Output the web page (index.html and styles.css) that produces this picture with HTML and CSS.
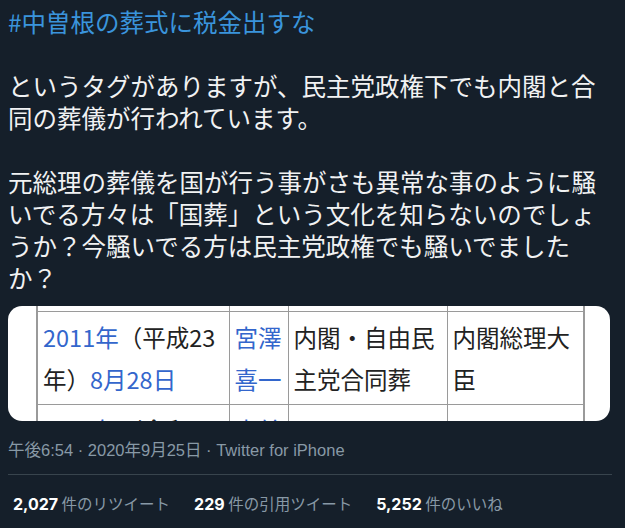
FILE: index.html
```html
<!DOCTYPE html>
<html lang="ja">
<head>
<meta charset="utf-8">
<title>Tweet</title>
<link rel="stylesheet" href="styles.css">
</head>
<body>
<article class="tweet">
  <div class="text">
    <p><a class="tag" href="#">#中曽根の葬式に税金出すな</a></p>
    <p>というタグがありますが、民主党政権下でも内閣と合同の葬儀が行われています。</p>
    <p>元総理の葬儀を国が行う事がさも異常な事のように騒いでる方々は「国葬」という文化を知らないのでしょうか？今騒いでる方は民主党政権でも騒いでましたか？</p>
  </div>
  <div class="media">
    <table class="wiki">
      <colgroup>
        <col class="c1"><col class="c2"><col class="c3"><col class="c4">
      </colgroup>
      <tr class="cut"><td></td><td></td><td></td><td></td></tr>
      <tr>
        <td><span class="link">2011年</span>（平成23<br>年）<span class="link">8月28日</span></td>
        <td><span class="link">宮澤<br>喜一</span></td>
        <td>内閣・自由民<br>主党合同葬</td>
        <td>内閣総理大<br>臣</td>
      </tr>
      <tr class="next">
        <td><div class="clip"><span class="link">2020年</span>（令和2</div></td>
        <td><div class="clip"><span class="link">中曽</span></div></td>
        <td><div class="clip"></div></td>
        <td><div class="clip"></div></td>
      </tr>
    </table>
  </div>
  <div class="meta">午後6:54 · 2020年9月25日 · Twitter for iPhone</div>
  <div class="stats">
    <span class="stat"><b>2,027</b> 件のリツイート</span>
    <span class="stat"><b>229</b> 件の引用ツイート</span>
    <span class="stat"><b>5,252</b> 件のいいね</span>
  </div>
</article>
</body>
</html>
```
FILE: styles.css
```css
html, body {
  margin: 0;
  background: #151f2a;
}

.tweet {
  margin: 0 13px 0 8px;
  padding-top: 6px;
  font-family: "Noto Sans CJK JP", sans-serif;
}

.text p {
  margin: 0 0 32px;
  font-size: 24.5px;
  line-height: 32px;
  color: #f1f2f3;
}

.text p:last-child {
  margin-bottom: 0;
}

.tag {
  color: #3a94dc;
  text-decoration: none;
}

.media {
  margin: 12px 2px 0 0;
  height: 115px;
  background: #fff;
  border-radius: 14px;
  overflow: hidden;
}

.wiki {
  border-collapse: collapse;
  table-layout: fixed;
  margin-left: 28px;
  border-left: 2px solid #9a9a9a;
  border-right: 2px solid #9a9a9a;
  font-family: "Noto Sans CJK JP", sans-serif;
  font-size: 23.5px;
  color: #222;
}

.c1 { width: 192px; }
.c2 { width: 59px; }
.c3 { width: 159px; }
.c4 { width: 137px; }

.wiki td {
  border: 1.5px solid #9a9a9a;
  padding: 4px 5px;
  line-height: 42px;
  vertical-align: top;
  white-space: nowrap;
  overflow: hidden;
}

.wiki tr.cut td {
  border-top: none;
  height: 5px;
  padding: 0;
  line-height: 0;
}

.wiki tr.next td {
  padding-bottom: 0;
}

.clip {
  height: 12px;
  overflow: hidden;
}

.link {
  color: #3366cc;
}

.meta {
  padding: 19px 0 14px;
  font-family: "Liberation Sans", "Noto Sans CJK JP", sans-serif;
  font-size: 16.5px;
  line-height: 20px;
  color: #8899a6;
  border-bottom: 1px solid #38444d;
}

.stats {
  display: flex;
  gap: 24px;
  padding: 18px 0 0 5px;
  font-family: "Noto Sans CJK JP", sans-serif;
  font-size: 15.5px;
  line-height: 20px;
  color: #8899a6;
}

.stats b {
  font-family: "Inter", "Liberation Sans", sans-serif;
  font-size: 16px;
  color: #fff;
  font-weight: 700;
}
```
